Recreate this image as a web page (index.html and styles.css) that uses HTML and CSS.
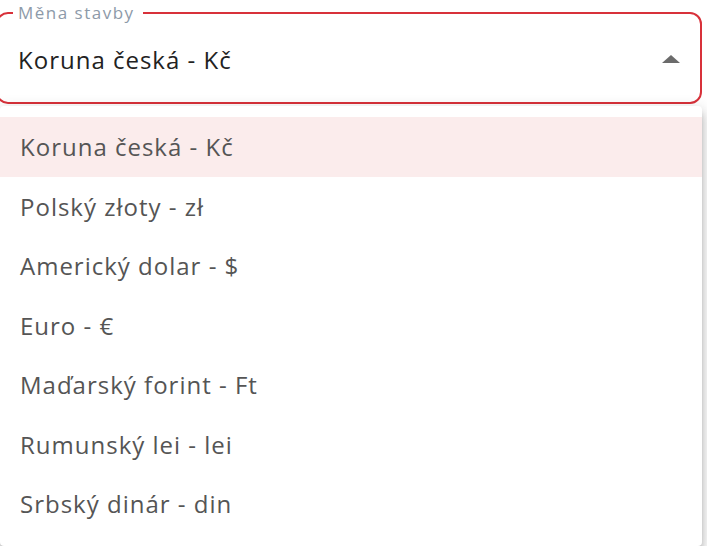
FILE: index.html
```html
<!DOCTYPE html>
<html lang="cs">
<head>
  <meta charset="UTF-8">
  <title>Měna stavby</title>
  <link rel="stylesheet" href="styles.css">
</head>
<body>
  <fieldset class="currency-field">
    <legend>Měna stavby</legend>
    <div class="currency-value">
      <span>Koruna česká - Kč</span>
      <svg class="arrow" width="18" height="8" viewBox="0 0 18 8"><path d="M0 8 L9 0 L18 8 Z" fill="#6b6b6b"/></svg>
    </div>
  </fieldset>
  <!-- Rozbalený seznam měn -->
  <ul class="currency-menu">
    <li class="menu-item selected">Koruna česká - Kč</li>
    <li class="menu-item">Polský złoty - zł</li>
    <li class="menu-item">Americký dolar - $</li>
    <li class="menu-item">Euro - €</li>
    <li class="menu-item">Maďarský forint - Ft</li>
    <li class="menu-item">Rumunský lei - lei</li>
    <li class="menu-item">Srbský dinár - din</li>
  </ul>
</body>
</html>
```
FILE: styles.css
```css
body {
  margin: 0;
  background: #fff;
  font-family: "Open Sans", Arial, sans-serif;
  overflow: hidden;
}
.currency-field {
  margin: 2px 0 0 -4px;
  width: 706px;
  box-sizing: border-box;
  border: 2px solid #d8313a;
  border-radius: 12px;
  padding: 0 20px 0 16px;
}
.currency-field legend {
  padding: 0 8px 0 5px;
  margin-left: -1px;
  font-size: 17px;
  letter-spacing: 1.5px;
  line-height: 22px;
  color: #8d9aa9;
}
.currency-value {
  display: flex;
  align-items: center;
  justify-content: space-between;
  height: 70px;
  padding: 0 0 8px 4px;
  font-size: 24px;
  letter-spacing: 1px;
  color: #222;
}
.arrow {
  display: block;
}
.currency-menu {
  list-style: none;
  margin: 2px 0 0 0;
  padding: 11px 0 12px;
  width: 702px;
  background: #fff;
  border-radius: 4px;
  box-shadow: 0 5px 5px -3px rgba(0, 0, 0, 0.25), 0 8px 10px 1px rgba(0, 0, 0, 0.16), 0 3px 14px 2px rgba(0, 0, 0, 0.12);
}
.menu-item {
  display: flex;
  align-items: center;
  height: 59.5px;
  padding: 0 20px;
  font-size: 24px;
  letter-spacing: 1px;
  color: #555;
}
.menu-item.selected {
  background: #fbecec;
}
```
